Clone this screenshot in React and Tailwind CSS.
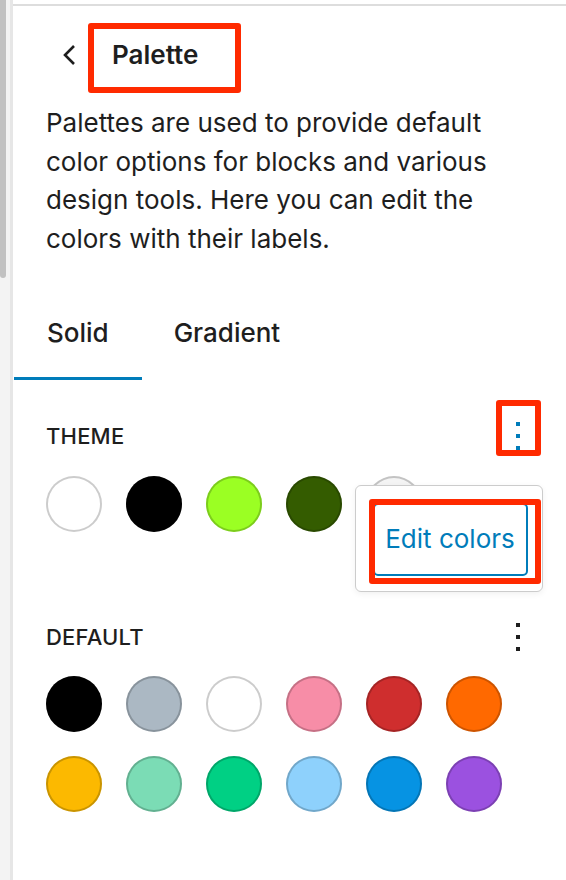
import React from "react";

const theme = ["#ffffff", "#000000", "#9bff23", "#345c00", "#f4f4f4"];
const defaults = [
  "#000000", "#abb8c3", "#ffffff", "#f78da7", "#cf2e2e", "#ff6900",
  "#fcb900", "#7bdcb5", "#00d084", "#8ed1fc", "#0693e3", "#9b51e0",
];

function Swatch({ color }) {
  return (
    <div
      className="w-[56px] h-[56px] rounded-full shadow-[inset_0_0_0_2px_rgba(0,0,0,0.2)]"
      style={{ backgroundColor: color }}
    />
  );
}

function Kebab({ color }) {
  return (
    <svg width="24" height="32" viewBox="0 0 24 32">
      <rect x="10" y="2" width="4" height="4" fill={color} />
      <rect x="10" y="14" width="4" height="4" fill={color} />
      <rect x="10" y="26" width="4" height="4" fill={color} />
    </svg>
  );
}

export default function App() {
  return (
    <div
      className="relative w-[566px] h-[880px] bg-white flex overflow-hidden text-[#1e1e1e]"
      style={{ fontFamily: "Inter, 'Noto Sans', sans-serif" }}
    >
      {/* left gutter / scrollbar */}
      <div className="w-[10px] h-full bg-[#f3f3f3]">
        <div className="w-[6px] h-[278px] bg-[#c1c1c1] rounded-b-[4px]" />
      </div>
      <div className="w-[3px] h-full bg-[#e6e6e6]" />

      {/* main column */}
      <div className="flex-1 flex flex-col">
        <div className="h-[4px]" />
        <div className="h-[2px] bg-[#dddddd]" />

        {/* header */}
        <div className="mt-[25px] h-[48px] flex items-center pl-[49px]">
          <svg width="15" height="22" viewBox="0 0 15 22" fill="none">
            <path d="M12 2 L3 11 L12 20" stroke="#1e1e1e" strokeWidth="2.6" />
          </svg>
          <span className="ml-[35px] text-[26px] font-semibold leading-[48px]">Palette</span>
        </div>

        {/* description */}
        <p className="mt-[25px] pl-[33px] pr-[33px] text-[26px] leading-[38.5px]">
          Palettes are used to provide default color options for blocks and various design tools. Here you can edit the colors with their labels.
        </p>

        {/* tabs */}
        <div className="mt-[26px] ml-[1px] flex">
          <div className="h-[96px] px-[33px] pt-[4px] flex items-center border-b-[3px] border-[#007cba]">
            <span className="text-[26px] font-medium leading-[32px]">Solid</span>
          </div>
          <div className="h-[96px] px-[32px] pt-[4px] flex items-center border-b-[3px] border-transparent">
            <span className="text-[26px] font-medium leading-[32px]">Gradient</span>
          </div>
        </div>

        {/* theme */}
        <div className="mt-[32px] h-[48px] flex items-center justify-between pl-[33px] pr-[36px]">
          <span className="text-[22px] font-medium tracking-[0.2px]">THEME</span>
          <Kebab color="#007cba" />
        </div>
        <div className="mt-[16px] pl-[33px] flex gap-[24px]">
          {theme.map((c, i) => (
            <Swatch key={i} color={c} />
          ))}
        </div>

        {/* default */}
        <div className="mt-[81px] h-[48px] flex items-center justify-between pl-[33px] pr-[36px]">
          <span className="text-[22px] font-medium tracking-[0.2px]">DEFAULT</span>
          <Kebab color="#1e1e1e" />
        </div>
        <div className="mt-[15px] pl-[33px] grid grid-cols-[repeat(6,56px)] gap-x-[24px] gap-y-[24px]">
          {defaults.map((c, i) => (
            <Swatch key={i} color={c} />
          ))}
        </div>
      </div>

      {/* popover */}
      <div className="absolute left-[355px] top-[485px] w-[188px] h-[107px] bg-white border-[1.5px] border-[#cccccc] rounded-[6px] shadow-[0_2px_6px_rgba(0,0,0,0.06)] pl-[16.5px] pt-[16.5px]">
        <div className="w-[155px] h-[73px] rounded-[5px] border-[2.5px] border-[#007cba] flex items-center justify-center">
          <span className="text-[26px] text-[#007cba] leading-none">Edit colors</span>
        </div>
      </div>

      {/* annotation boxes */}
      <div className="absolute left-[88px] top-[23px] w-[153px] h-[70px] border-[6px] border-[#ff2a00] rounded-[3px]" />
      <div className="absolute left-[496px] top-[400px] w-[45px] h-[56px] border-[6px] border-[#ff2a00] rounded-[3px]" />
      <div className="absolute left-[369px] top-[499px] w-[172px] h-[85px] border-[6px] border-[#ff2a00] rounded-[3px]" />
    </div>
  );
}
